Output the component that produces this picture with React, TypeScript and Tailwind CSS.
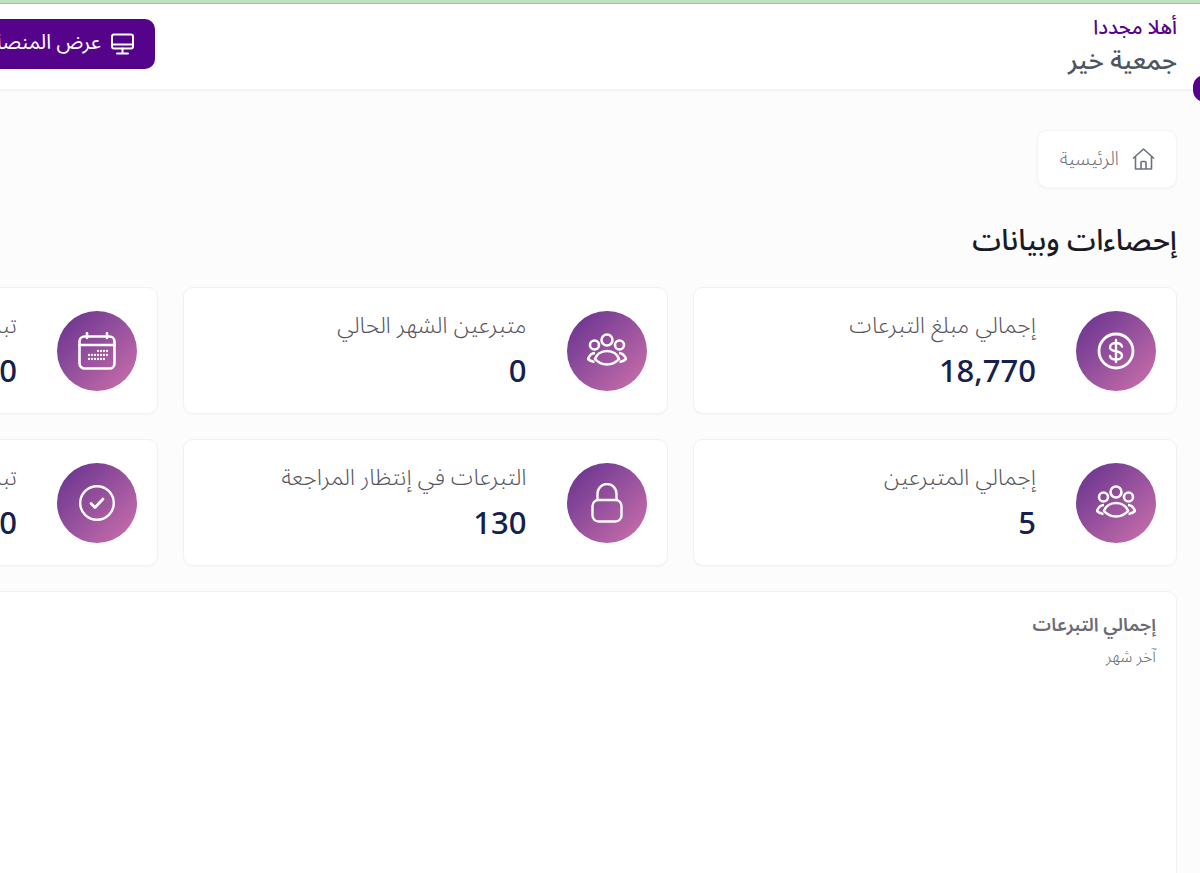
import type { ReactNode } from "react";

const font = { fontFamily: '"Noto Sans Arabic", "Noto Sans", "DejaVu Sans", "Liberation Sans", sans-serif' };

function Dollar() {
  return (
    <svg width="38" height="38" viewBox="0 0 38 38" fill="none" stroke="white" strokeWidth="2.8" strokeLinecap="round">
      <circle cx="19" cy="19" r="17" />
      <path d="M25 14.5c-.6-2.200-3-3.500-6-3.500-3.400 0-6 1.800-6 4.200 0 2.600 2.600 3.500 6 4.100 3.400.6 6 1.500 6 4.200 0 2.400-2.600 4.100-6 4.100-3 0-5.400-1.300-6-3.500M19 8v22" strokeWidth="2.400" />
    </svg>
  );
}

function Users() {
  return (
    <svg width="40" height="36" viewBox="0 0 40 36" fill="none" stroke="white" strokeWidth="2.600">
      <circle cx="20" cy="7" r="5.500" />
      <circle cx="7.500" cy="12" r="4.500" />
      <circle cx="32.500" cy="12" r="4.500" />
      <path d="M20 18c-6 0-10.500 3.500-12 8 3 3.500 7 5.500 12 5.500s9-2 12-5.500c-1.500-4.500-6-8-12-8z" />
      <path d="M8 20c-3.500.3-5.800 2.500-7 6 2 2 4 2.800 6.500 3M32 20c3.500.3 5.800 2.500 7 6-2 2-4 2.800-6.500 3" />
    </svg>
  );
}

function Calendar() {
  const dots = [
    [20, 15], [23, 15], [26, 15], [29, 15],
    [11, 19], [14, 19], [17, 19], [20, 19], [23, 19], [26, 19], [29, 19],
    [11, 23], [14, 23], [17, 23], [20, 23], [23, 23], [26, 23],
  ];
  return (
    <svg width="38" height="38" viewBox="0 0 38 38" fill="none" stroke="white" strokeWidth="2.600" strokeLinecap="round">
      <rect x="1.500" y="4.500" width="35" height="32" rx="5" />
      <path d="M1.500 13h35M9 1v5M29 1v5" />
      {dots.map(([x, y]) => (
        <circle key={`${x}-${y}`} cx={x} cy={y + 4} r="1.150" fill="white" stroke="none" />
      ))}
    </svg>
  );
}

function Check() {
  return (
    <svg width="36" height="36" viewBox="0 0 36 36" fill="none" stroke="white" strokeWidth="2.400" strokeLinecap="round" strokeLinejoin="round">
      <circle cx="18" cy="18" r="16.800" />
      <path d="M12 18.500l4 4 8-8.500" strokeWidth="2.800" />
    </svg>
  );
}

function Lock() {
  return (
    <svg width="32" height="40" viewBox="0 0 32 40" fill="none" stroke="white" strokeWidth="2.400">
      <rect x="1.500" y="17" width="29" height="21.500" rx="6" />
      <path d="M6.500 17v-6.500a9.500 9.500 0 0 1 19 0V17" />
    </svg>
  );
}

function Home() {
  return (
    <svg width="23" height="22" viewBox="0 0 23 22" fill="none" stroke="#6b7280" strokeWidth="1.600" strokeLinejoin="round">
      <path d="M1 10.500L11.500 1 22 10.500M3.500 8.500V21h16V8.500" />
      <path d="M9 21v-6.500a1 1 0 0 1 1-1h3a1 1 0 0 1 1 1V21" />
    </svg>
  );
}

function Monitor() {
  return (
    <svg width="23" height="22" viewBox="0 0 23 22" fill="none" stroke="white" strokeWidth="2" strokeLinecap="round">
      <rect x="1" y="1.500" width="21" height="14" rx="2" />
      <path d="M1 11.500h21M11.500 15.500V20M6 20.500h11" />
    </svg>
  );
}

function StatCard({ icon, label, value }: { icon: ReactNode; label: string; value: string }) {
  return (
    <div className="flex h-[127px] w-[484.500px] shrink-0 items-center gap-[40px] rounded-[10px] border border-[#f0f1f3] bg-white pr-[20px] shadow-[0_1px_2px_rgba(0,0,0,0.03)]">
      <div className="flex h-[80px] w-[80px] shrink-0 items-center justify-center rounded-full bg-gradient-to-br from-[#652f8d] to-[#cf71ab]">
        {icon}
      </div>
      <div className="flex flex-col whitespace-nowrap">
        <span className="mt-[2px] text-[23px] font-light leading-[28px] text-[#55555e]">{label}</span>
        <span className="mt-[13px] text-[31px] font-medium leading-[38px] text-[#16204f]">{value}</span>
      </div>
    </div>
  );
}

export default function App() {
  return (
    <div dir="rtl" style={font} className="relative h-[873px] w-[1200px] overflow-hidden bg-[#fcfcfd]">
      <div className="h-[4px] border-b border-[#9fc7a0] bg-[#c0dfc0]" />
      <header className="flex h-[87px] items-center border-b-2 border-[#f2f3f7] bg-white pr-[23px]">
        <div className="flex flex-1 flex-col whitespace-nowrap">
          <span className="text-[20px] font-medium leading-[26px] text-[#56038c]">أهلا مجددا</span>
          <span className="mt-[2px] text-[25.500px] font-medium leading-[36px] text-[#4b5563]">جمعية خير</span>
        </div>
        <div className="ml-[-25px] mb-[6px] flex h-[50px] w-[180px] shrink-0 items-center gap-[10px] rounded-[10px] bg-[#56038c] pr-[21px] text-[20.500px] text-white whitespace-nowrap">
          <Monitor />
          <span>عرض المنصة</span>
        </div>
      </header>
      <div className="absolute right-[-17px] top-[75px] h-[27px] w-[24px] rounded-full bg-[#56038c]" />

      <main className="pr-[23px]">
        <div className="mt-[39px] flex h-[58px] w-[140px] items-center gap-[13px] rounded-[10px] border border-[#f3f4f6] bg-white pr-[21px] shadow-[0_1px_3px_rgba(0,0,0,0.04)]">
          <Home />
          <span className="text-[19px] font-light text-[#6b7280] whitespace-nowrap">الرئيسية</span>
        </div>

        <h1 className="mt-[33px] text-[29px] font-medium leading-[40px] text-[#1a1a24] whitespace-nowrap">إحصاءات وبيانات</h1>

        <div className="mt-[26px] flex gap-[25px]">
          <StatCard icon={<Dollar />} label="إجمالي مبلغ التبرعات" value="18,770" />
          <StatCard icon={<Users />} label="متبرعين الشهر الحالي" value="0" />
          <StatCard icon={<Calendar />} label="تبرعات الشهر الحالي" value="0" />
        </div>
        <div className="mt-[25px] flex gap-[25px]">
          <StatCard icon={<Users />} label="إجمالي المتبرعين" value="5" />
          <StatCard icon={<Lock />} label="التبرعات في إنتظار المراجعة" value="130" />
          <StatCard icon={<Check />} label="تبرعات تمت مراجعتها" value="0" />
        </div>

        <section className="mt-[25px] h-[400px] w-[1500px] rounded-[10px] border border-[#f0f1f3] bg-white pr-[20px] pt-[20px]">
          <h2 className="text-[18.500px] font-semibold leading-[28px] text-[#6b6b75]">إجمالي التبرعات</h2>
          <p className="mt-[7px] text-[16px] font-light leading-[20px] text-[#66666e]">آخر شهر</p>
        </section>
      </main>
    </div>
  );
}
